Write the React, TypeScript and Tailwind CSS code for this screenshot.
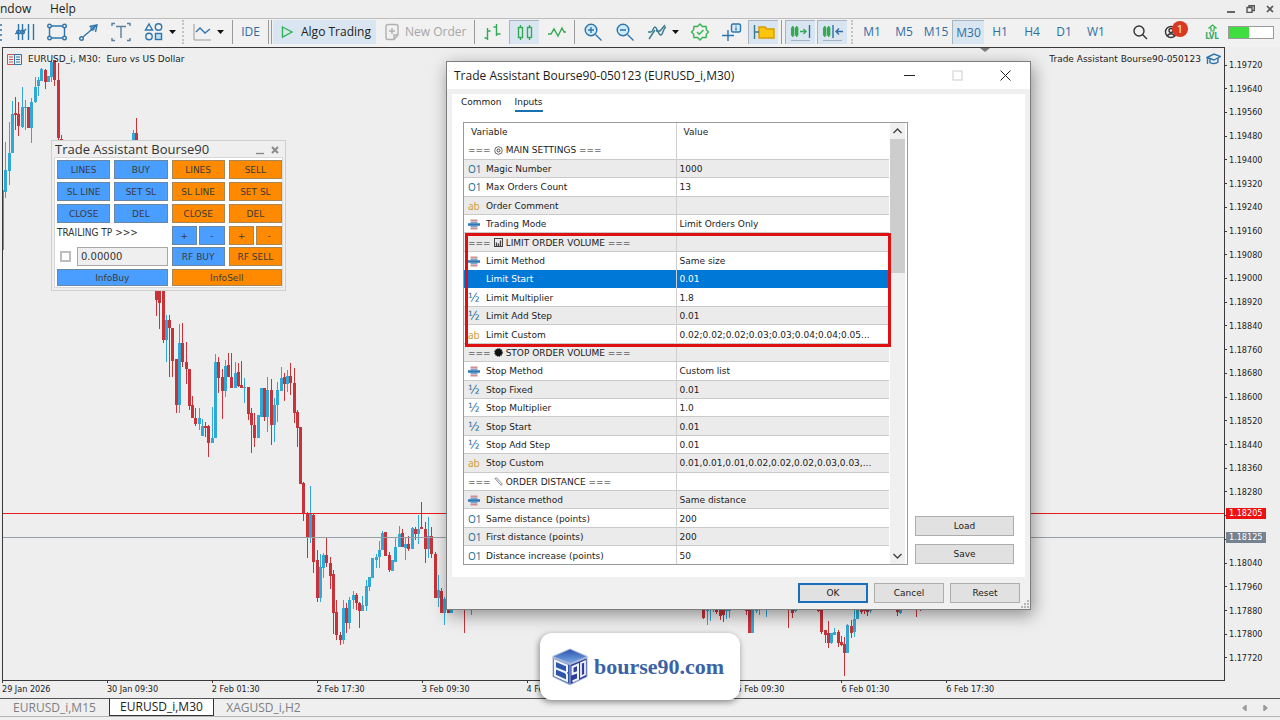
import type { ReactNode } from "react";

// bar index, direction (1 up, 0 down), high, body top, body bottom, low
type Candle = [number, 0 | 1, number, number, number, number];

const candles: Candle[] = [
  [0, 1, 143, 143, 203, 203],
  [1, 1, 95, 123, 145, 151],
  [2, 1, 75, 106, 124, 138],
  [3, 1, 54, 67, 106, 106],
  [4, 0, 50, 66, 68, 83],
  [5, 0, 55, 67, 79, 89],
  [6, 1, 40, 60, 80, 81],
  [7, 1, 53, 60, 61, 83],
  [8, 0, 60, 60, 81, 81],
  [9, 1, 51, 55, 81, 96],
  [10, 1, 30, 40, 55, 56],
  [11, 1, 30, 33, 39, 49],
  [12, 1, 21, 22, 34, 34],
  [13, 0, 22, 23, 35, 42],
  [14, 1, 29, 29, 35, 35],
  [15, 1, 13, 15, 30, 35],
  [16, 0, 13, 13, 33, 39],
  [17, 0, 16, 33, 91, 93],
  [18, 0, 88, 92, 120, 120],
  [40, 1, 83, 86, 93, 110],
  [41, 0, 71, 86, 93, 110],
  [47, 0, 230, 240, 253, 269],
  [48, 0, 230, 240, 256, 282],
  [49, 0, 230, 240, 293, 296],
  [50, 1, 268, 273, 293, 315],
  [51, 0, 268, 273, 281, 330],
  [52, 0, 281, 281, 314, 330],
  [53, 0, 312, 312, 358, 366],
  [54, 1, 277, 296, 358, 366],
  [55, 0, 276, 296, 315, 320],
  [56, 0, 295, 315, 322, 337],
  [57, 0, 322, 322, 359, 363],
  [58, 0, 349, 358, 371, 371],
  [59, 0, 361, 371, 377, 379],
  [60, 1, 361, 371, 377, 383],
  [61, 1, 372, 379, 389, 389],
  [62, 0, 375, 379, 381, 390],
  [63, 0, 378, 379, 396, 410],
  [64, 1, 360, 391, 396, 396],
  [65, 1, 307, 315, 391, 391],
  [66, 0, 310, 315, 331, 346],
  [67, 0, 322, 330, 344, 372],
  [68, 1, 313, 319, 344, 350],
  [69, 0, 306, 318, 330, 330],
  [70, 0, 306, 330, 341, 341],
  [71, 1, 315, 326, 341, 341],
  [72, 0, 316, 325, 339, 340],
  [73, 0, 314, 338, 341, 341],
  [74, 1, 331, 340, 341, 356],
  [75, 0, 340, 340, 367, 373],
  [76, 0, 361, 366, 378, 406],
  [77, 0, 366, 378, 391, 400],
  [78, 1, 368, 368, 391, 391],
  [79, 1, 341, 341, 370, 370],
  [80, 0, 341, 341, 370, 374],
  [81, 1, 330, 343, 370, 385],
  [82, 0, 332, 343, 378, 398],
  [83, 1, 351, 358, 378, 395],
  [84, 1, 335, 343, 358, 375],
  [85, 1, 320, 331, 344, 344],
  [86, 0, 326, 330, 337, 354],
  [87, 1, 323, 329, 337, 345],
  [88, 0, 316, 329, 336, 348],
  [89, 0, 321, 336, 366, 376],
  [90, 0, 363, 365, 381, 400],
  [91, 0, 380, 380, 437, 437],
  [92, 0, 435, 436, 466, 474],
  [93, 0, 465, 466, 490, 511],
  [94, 1, 439, 466, 490, 496],
  [95, 0, 467, 468, 515, 526],
  [96, 0, 503, 513, 551, 555],
  [97, 1, 507, 520, 551, 555],
  [98, 1, 506, 508, 521, 531],
  [99, 0, 490, 508, 516, 520],
  [100, 0, 510, 516, 529, 542],
  [101, 0, 523, 527, 566, 587],
  [102, 0, 553, 565, 588, 593],
  [103, 0, 585, 588, 593, 598],
  [104, 1, 553, 561, 593, 597],
  [105, 0, 556, 561, 576, 586],
  [106, 1, 550, 553, 576, 582],
  [107, 1, 544, 548, 553, 562],
  [108, 0, 546, 548, 556, 563],
  [109, 0, 555, 556, 564, 581],
  [110, 1, 549, 558, 564, 564],
  [111, 1, 533, 539, 559, 564],
  [112, 1, 530, 530, 540, 544],
  [113, 1, 511, 511, 531, 531],
  [114, 1, 507, 510, 513, 521],
  [115, 1, 494, 503, 510, 521],
  [116, 1, 484, 486, 503, 503],
  [117, 0, 485, 485, 509, 509],
  [118, 0, 505, 508, 523, 525],
  [119, 1, 513, 513, 524, 524],
  [120, 1, 490, 500, 515, 515],
  [121, 1, 479, 487, 500, 500],
  [122, 0, 482, 486, 500, 500],
  [123, 1, 490, 497, 501, 513],
  [124, 0, 489, 497, 502, 504],
  [125, 1, 480, 481, 502, 502],
  [126, 0, 480, 482, 487, 493],
  [127, 1, 468, 482, 487, 497],
  [128, 0, 455, 480, 482, 482],
  [129, 0, 475, 482, 502, 516],
  [130, 1, 470, 489, 502, 511],
  [131, 0, 480, 489, 507, 511],
  [132, 0, 505, 507, 551, 551],
  [133, 1, 528, 543, 551, 560],
  [134, 0, 541, 544, 566, 566],
  [135, 1, 550, 552, 566, 578],
  [136, 0, 559, 560, 566, 566],
  [137, 1, 558, 560, 566, 566],
  [141, 0, 540, 550, 552, 586],
  [143, 1, 540, 550, 552, 568],
  [214, 0, 540, 550, 571, 572],
  [215, 1, 540, 550, 564, 578],
  [216, 1, 540, 550, 552, 574],
  [217, 1, 540, 550, 552, 565],
  [218, 0, 540, 550, 565, 567],
  [219, 0, 540, 550, 569, 573],
  [220, 0, 540, 550, 568, 575],
  [221, 1, 540, 550, 564, 572],
  [222, 1, 540, 550, 564, 571],
  [227, 0, 540, 550, 564, 568],
  [228, 0, 540, 550, 586, 586],
  [229, 1, 540, 550, 586, 586],
  [230, 1, 540, 550, 564, 566],
  [231, 1, 540, 550, 552, 568],
  [233, 1, 540, 550, 552, 570],
  [240, 0, 540, 550, 552, 581],
  [241, 0, 540, 550, 566, 571],
  [242, 1, 540, 550, 564, 565],
  [249, 0, 540, 550, 564, 565],
  [250, 0, 540, 550, 585, 587],
  [251, 0, 583, 583, 588, 596],
  [252, 0, 574, 586, 596, 601],
  [253, 1, 586, 586, 596, 597],
  [254, 1, 581, 585, 588, 588],
  [255, 0, 583, 585, 596, 600],
  [256, 0, 589, 595, 598, 599],
  [257, 0, 590, 597, 606, 629],
  [258, 1, 577, 578, 606, 606],
  [259, 0, 573, 579, 586, 591],
  [260, 1, 560, 572, 585, 590],
  [261, 1, 550, 555, 572, 572],
  [262, 0, 540, 550, 565, 567],
  [263, 0, 540, 550, 564, 567],
  [264, 0, 540, 550, 565, 569],
  [265, 1, 540, 550, 564, 566],
  [273, 0, 540, 550, 565, 569],
  [274, 1, 540, 550, 566, 567],
  [279, 0, 540, 550, 552, 570],
  [280, 0, 540, 550, 552, 564],
];

const prices = Array.from({ length: 26 }, (_, i) => (1.1972 - i * 0.0008).toFixed(5));

// these two give way to the bid and ask tags
const covered = ["1.18200", "1.18120"];

const times = [
  "29 Jan 2026", "30 Jan 09:30", "2 Feb 01:30", "2 Feb 17:30", "3 Feb 09:30",
  "4 Feb 01:30", "4 Feb 17:30", "5 Feb 09:30", "6 Feb 01:30", "6 Feb 17:30",
];

const timeframes = ["M1", "M5", "M15", "M30", "H1", "H4", "D1", "W1"];

type Kind = "int" | "str" | "enum" | "real" | "gear" | "stats" | "burst" | "ruler";

const inputs: [Kind, string, string][] = [
  ["gear", "MAIN SETTINGS", ""],
  ["int", "Magic Number", "1000"],
  ["int", "Max Orders Count", "13"],
  ["str", "Order Comment", ""],
  ["enum", "Trading Mode", "Limit Orders Only"],
  ["stats", "LIMIT ORDER VOLUME", ""],
  ["enum", "Limit Method", "Same size"],
  ["real", "Limit Start", "0.01"],
  ["real", "Limit Multiplier", "1.8"],
  ["real", "Limit Add Step", "0.01"],
  ["str", "Limit Custom", "0.02;0.02;0.02;0.03;0.03;0.04;0.04;0.05..."],
  ["burst", "STOP ORDER VOLUME", ""],
  ["enum", "Stop Method", "Custom list"],
  ["real", "Stop Fixed", "0.01"],
  ["real", "Stop Multiplier", "1.0"],
  ["real", "Stop Start", "0.01"],
  ["real", "Stop Add Step", "0.01"],
  ["str", "Stop Custom", "0.01,0.01,0.01,0.02,0.02,0.02,0.03,0.03,..."],
  ["ruler", "ORDER DISTANCE", ""],
  ["enum", "Distance method", "Same distance"],
  ["int", "Same distance (points)", "200"],
  ["int", "First distance (points)", "200"],
  ["int", "Distance increase (points)", "50"],
];

const SELECTED = 7;

function Icon({ children, w = 20, h = 20, color = "#2f75ad" }: { children: ReactNode; w?: number; h?: number; color?: string }) {
  return (
    <svg width={w} height={h} viewBox={`0 0 ${w} ${h}`} fill="none" stroke={color} strokeWidth="1.4" className="shrink-0" aria-hidden="true">
      {children}
    </svg>
  );
}

function Caret() {
  return (
    <svg width="7" height="4" viewBox="0 0 7 4" className="shrink-0" aria-hidden="true">
      <path d="M0 0h7L3.5 4z" fill="#111" />
    </svg>
  );
}

function Tool({ label, className, children }: { label: string; className: string; children: ReactNode }) {
  return (
    <button type="button" aria-label={label} className={`flex h-full shrink-0 items-center justify-center ${className}`}>
      {children}
    </button>
  );
}

const active = "border-t border-l border-[#a9b4c0] bg-[#d9e6f2]";

function Separator() {
  return <span className="h-6 w-px shrink-0 bg-[#9a9a9a]" />;
}

function Dots() {
  return <span className="h-6 w-0 shrink-0 border-l-2 border-dotted border-[#c4c4c4]" />;
}

function Toolbar() {
  return (
    <div className="flex h-[29px] shrink-0 items-center overflow-hidden border-t border-[#bdbdbd] bg-[#f1f1f1] pt-px pb-[3px] font-['Open_Sans',sans-serif] text-[12px]">
      <Tool label="Fibonacci" className="w-[9px] !justify-start">
        <Icon w={4}>
          <path d="M0 3h2M0 8h2M0 13h2M0 18h2" />
        </Icon>
      </Tool>
      <Tool label="Cycle lines" className="w-8">
        <Icon>
          <path d="M3.5 2v16M7.5 2v16M13.5 2v16M18.5 2v16M0 12l3-2M8 10l3-3" />
          <circle cx="3.5" cy="10" r="1.8" />
          <circle cx="7.5" cy="10" r="1.8" />
        </Icon>
      </Tool>
      <Tool label="Rectangle" className="w-8">
        <Icon>
          <path d="M4.5 4h11M4.5 16h11M2.5 6v8M17.5 6v8" />
          <circle cx="2.5" cy="4" r="1.8" />
          <circle cx="17.5" cy="4" r="1.8" />
          <circle cx="2.5" cy="16" r="1.8" />
          <circle cx="17.5" cy="16" r="1.8" />
        </Icon>
      </Tool>
      <Tool label="Arrow line" className="w-8">
        <Icon>
          <path d="M4 15L18 3M10.5 4.5L18 3l-1.5 7" />
          <circle cx="2.5" cy="16.5" r="1.8" />
          <circle cx="13.5" cy="6.5" r="1.6" />
        </Icon>
      </Tool>
      <Tool label="Text" className="w-8">
        <Icon color="#5b7f9d">
          <path d="M1 4V1.5h3M16 1.5h3V4M1 16v2.5h3M16 18.5h3V16M5 4.5h10M10 4.5V16" />
        </Icon>
      </Tool>
      <Tool label="Shapes" className="w-[45px] gap-[5px]">
        <Icon>
          <path d="M5 2l3.5 6h-7z" />
          <circle cx="14.5" cy="5" r="3.2" />
          <circle cx="5" cy="14.5" r="3.2" />
          <rect x="11.5" y="11.5" width="6" height="6" fill="#bfe0f5" />
        </Icon>
        <Caret />
      </Tool>
      <Dots />
      <Tool label="Chart type" className="w-12 gap-[5px]">
        <Icon color="#9a9a9a">
          <path d="M2 2v16h17" strokeWidth="1" />
          <path d="M4 10l4-4 5 5 5-4" stroke="#2f75ad" />
        </Icon>
        <Caret />
      </Tool>
      <Separator />
      <Tool label="IDE" className="w-[35px] text-[#2f6ea5]">IDE</Tool>
      <Separator />
      <span className="w-[2px] shrink-0" />
      <Separator />
      <button type="button" className="ml-px flex h-full w-[103px] shrink-0 items-center gap-2 bg-[#d9e6f2] pl-2 text-[#222]">
        <Icon w={12} h={14} color="#2eb352">
          <path d="M1.5 2L11 7l-9.5 5z" />
        </Icon>
        <span className="whitespace-nowrap">Algo Trading</span>
      </button>
      <button type="button" className="flex h-full w-[98px] shrink-0 items-center gap-[5px] pl-2 text-[#a6a6a6]" disabled>
        <Icon w={16} h={18} color="#b0b0b0">
          <path d="M2 3.5a2 2 0 0 1 2-2h8a2 2 0 0 1 2 2V12l-4 4.5H4a2 2 0 0 1-2-2zM14 12h-4v4.5M8 5v6M5 8h6" />
        </Icon>
        <span className="whitespace-nowrap">New Order</span>
      </button>
      <Separator />
      <Tool label="Bar chart" className="w-[34px]">
        <Icon color="#35a853">
          <path d="M5.5 6v12M5.5 9h3M2.5 16h3M14.5 2v12M14.5 12h4M11.5 5h3" />
        </Icon>
      </Tool>
      <Tool label="Candlesticks" className={`w-[30px] ${active}`}>
        <Icon color="#35a853">
          <rect x="3.5" y="4.5" width="4" height="10" />
          <rect x="12.5" y="4.5" width="4" height="10" />
          <path d="M5.5 2v2.5M5.5 14.5V17M14.5 2v2.5M14.5 14.5V17" />
        </Icon>
      </Tool>
      <Tool label="Line chart" className="w-[35px]">
        <Icon color="#35a853">
          <path d="M1 12h3l3-5 4 7 4-8 2 4h2" />
        </Icon>
      </Tool>
      <Separator />
      <Tool label="Zoom in" className="ml-[2px] w-8">
        <Icon>
          <circle cx="8" cy="8" r="5.8" fill="#cfeaf8" />
          <path d="M12.5 12.5l6 6M5 8h6M8 5v6" />
        </Icon>
      </Tool>
      <Tool label="Zoom out" className="w-8">
        <Icon>
          <circle cx="8" cy="8" r="5.8" fill="#cfeaf8" />
          <path d="M12.5 12.5l6 6M5 8h6" />
        </Icon>
      </Tool>
      <Tool label="Indicators" className="w-[43px] gap-[5px]">
        <Icon color="#3a7a8f">
          <path d="M1 10h3c2 0 2-5 4-5s3 8 6 8c2 0 2-7 5-8M2 17L8 8M9 9h4l5-6" />
        </Icon>
        <Caret />
      </Tool>
      <Tool label="Experts" className="w-8">
        <Icon color="#35b552">
          <path d="M10 2l2.5 2.5H16l.5 3.500 2 2-2 2-.5 3.500h-3.500L10 18l-2.500-2.500H4L3.500 12l-2-2 2-2L4 4.500h3.500z" />
          <path d="M7 10l2.2 2.2L13.5 8" />
        </Icon>
      </Tool>
      <Tool label="Crosshair" className="w-8">
        <Icon>
          <path d="M6 8v11M0 13.5h12" />
          <rect x="9.5" y="2" width="9" height="8" rx="1.5" fill="#d6ecf8" />
          <path d="M14 5.5v3M14 3.5v1" />
        </Icon>
      </Tool>
      <Tool label="Data folder" className={`w-[30px] ${active}`}>
        <Icon w={22} color="#d79a00">
          <path d="M6 4h6l2 2h7v9H6z" fill="#fdc50c" />
          <path d="M1.5 2v14M1.5 9H6" stroke="#3a7a8f" />
        </Icon>
      </Tool>
      <span className="w-[3px] shrink-0" />
      <Separator />
      <Tool label="Auto scroll" className={`ml-[3px] w-[30px] ${active}`}>
        <Icon w={22} color="#35a853">
          <rect x="1.7" y="5" width="2" height="7" fill="#35c853" />
          <rect x="5.7" y="5" width="2" height="7" fill="#35c853" />
          <path d="M2.7 3v11M6.7 3v11M10 8.5h6M13.5 6L16 8.5 13.5 11" />
          <path d="M19.5 2v13" stroke="#2f6ea5" />
          <path d="M1 17.5h19" stroke="#a5b4c4" strokeWidth="1" />
        </Icon>
      </Tool>
      <Tool label="Chart shift" className={`ml-[2px] w-[30px] ${active}`}>
        <Icon w={22} color="#35a853">
          <rect x="1.7" y="5" width="2" height="7" fill="#35c853" />
          <rect x="5.7" y="5" width="2" height="7" fill="#35c853" />
          <path d="M2.7 3v11M6.7 3v11" />
          <path d="M11 2v13M14 8.5h7M17 5.5l-3 3 3 3" stroke="#2f6ea5" />
          <path d="M1 17.5h19" stroke="#a5b4c4" strokeWidth="1" />
        </Icon>
      </Tool>
      <span className="w-1 shrink-0" />
      <Dots />
      <div className="ml-[3px] flex h-full">
        {timeframes.map((t) => (
          <button key={t} type="button" className={`flex h-full w-8 items-center justify-center text-[#2f6ea5] ${t === "M30" ? active : ""}`}>
            {t}
          </button>
        ))}
      </div>
      <div className="ml-auto flex h-full items-center pr-[6px]">
        <Tool label="Search" className="w-8">
          <Icon w={16} h={16} color="#333">
            <circle cx="7" cy="7" r="5" />
            <path d="M10.5 10.5L15 15" />
          </Icon>
        </Tool>
        <button type="button" aria-label="Account" className="relative ml-2 flex h-full w-8 items-center">
          <Icon w={16} h={16} color="#333">
            <circle cx="7" cy="8" r="5.5" />
            <circle cx="7" cy="6.5" r="2" />
            <path d="M3.5 12c1-3 6-3 7 0" />
          </Icon>
          <span className="absolute top-px left-2 flex h-4 w-4 items-center justify-center rounded-full bg-[#db3823] text-[11px] text-white">1</span>
        </button>
        <div className="ml-1 flex w-6 flex-col items-center gap-px font-['DejaVu_Sans_Condensed',sans-serif] text-[8px] leading-[8px] font-bold text-[#35a86a]">
          <Icon w={9} h={8} color="#35b552">
            <path d="M4.5 1L8 4H6v3H3V4H1z" strokeWidth="1.2" />
          </Icon>
          LVL
        </div>
        <span className="ml-1 flex h-[13px] w-[46px] border border-[#9a9a9a] bg-white">
          <span className="w-5 bg-[#3fdd3f]" />
        </span>
      </div>
    </div>
  );
}

function KindIcon({ kind }: { kind: Kind }) {
  if (kind === "int") return <span className="font-['Noto_Sans',sans-serif] text-[10px] text-[#2b7494]">O1</span>;
  if (kind === "str") return <span className="font-['Noto_Sans',sans-serif] text-[10px] text-[#cf9d35]">ab</span>;
  if (kind === "enum")
    return (
      <svg width="12" height="11" viewBox="0 0 12 11" aria-hidden="true">
        <path d="M2.5 1.5h7M2.5 9.5h7" stroke="#d08f8f" strokeWidth="2" />
        <path d="M2.5 3.5h7M2.5 7.5h7" stroke="#7ba3c9" strokeWidth="1.5" />
        <path d="M0 5.5h12" stroke="#2f78b5" strokeWidth="2.5" />
      </svg>
    );
  if (kind === "real") return <span className="font-['DejaVu_Sans',sans-serif] text-[12px] leading-[12px] text-[#2b6f94]">½</span>;
  return (
    <svg width="9" height="9" viewBox="0 0 9 9" fill="none" stroke="#444" aria-hidden="true">
      {kind === "gear" && (
        <>
          <circle cx="4.5" cy="4.5" r="3.8" strokeWidth=".8" />
          <circle cx="4.5" cy="4.5" r="1.5" />
        </>
      )}
      {kind === "stats" && (
        <>
          <rect x=".5" y=".5" width="8" height="8" />
          <path d="M2.5 8V4.5M4.5 8V5.5M6.5 8V2.5" strokeWidth="1.3" />
        </>
      )}
      {kind === "burst" && <circle cx="4.5" cy="4.5" r="3.4" fill="#111" stroke="#111" strokeWidth="1.6" strokeDasharray="1.2 .6" />}
      {kind === "ruler" && <path d="M1 1.5L2.5.8 8.3 7 7 8.3z" stroke="#777" strokeWidth=".9" />}
    </svg>
  );
}

function DialogButton({ children, className = "" }: { children: ReactNode; className?: string }) {
  return (
    <button type="button" className={`flex h-5 items-center justify-center bg-[#e1e1e1] pt-[2px] ${className}`}>
      {children}
    </button>
  );
}

function InputsDialog() {
  return (
    <section
      role="dialog"
      aria-label="Trade Assistant Bourse90-050123"
      className="absolute top-[61px] left-[446px] flex w-[585px] flex-col border border-[#7d7d7d] bg-[#f0f0f0] font-['DejaVu_Sans',sans-serif] text-[9px] text-[#1b1b1b] shadow-[2px_5px_16px_rgba(0,0,0,0.4)]"
    >
      <header className="flex h-[27px] items-center bg-white pr-px pl-[7px] font-['Open_Sans',sans-serif] text-[12px]">
        <h2 className="flex-1">Trade Assistant Bourse90-050123 (EURUSD_i,M30)</h2>
        <button type="button" aria-label="Minimize" className="flex h-full w-12 items-center justify-center">
          <Icon w={11} h={11} color="#222"><path d="M0 5.5h11" strokeWidth="1" /></Icon>
        </button>
        <button type="button" aria-label="Maximize" className="flex h-full w-12 items-center justify-center" disabled>
          <Icon w={11} h={11} color="#ccc"><rect x="1" y="1" width="9" height="9" strokeWidth="1" /></Icon>
        </button>
        <button type="button" aria-label="Close" className="flex h-full w-12 items-center justify-center">
          <Icon w={11} h={11} color="#222"><path d="M.5.5l10 10M10.5.5l-10 10" strokeWidth="1" /></Icon>
        </button>
      </header>

      <div className="mx-[5px] mt-[5px] flex flex-col bg-white px-[11px] pb-3">
        <nav className="-ml-[2px] flex h-7 items-start gap-[13px] pt-px">
          <button type="button" className="h-[17px] border-b-2 border-transparent">Common</button>
          <button type="button" className="h-[17px] border-b-2 border-[#1a70b0]">Inputs</button>
        </nav>

        <div className="flex gap-[7px]">
          <div className="relative flex h-[443px] flex-1 overflow-hidden border border-[#9b9b9b] bg-white pr-[2px]">
            <table className="mr-px h-full flex-1 table-fixed border-collapse text-left">
              <thead>
                <tr className="h-[18px]">
                  <th className="w-[212px] border-r border-[#cfcfcf] p-0 pt-[2px] pl-[7px] font-normal">Variable</th>
                  <th className="p-0 pt-[2px] pl-[7px] font-normal">Value</th>
                </tr>
              </thead>
              <tbody>
                {inputs.map(([kind, name, value], i) => {
                  const heading = ["gear", "stats", "burst", "ruler"].includes(kind);
                  const selected = i === SELECTED;
                  return (
                    <tr
                      key={name}
                      className={`h-[18px] ${selected ? "bg-[#0078d7] text-white" : i % 2 ? "border-y border-[#cacaca] bg-[#ebebeb]" : ""}`}
                    >
                      <td className="border-r border-[#cfcfcf] p-0 pt-px pl-1 leading-[14px]">
                        {heading ? (
                          <span className="flex items-center gap-[3px] whitespace-nowrap">
                            === <KindIcon kind={kind} /> {name} ===
                          </span>
                        ) : (
                          <span className="flex items-center gap-[5px] whitespace-nowrap">
                            <span className="flex w-[13px] items-center">{!selected && <KindIcon kind={kind} />}</span>
                            {name}
                          </span>
                        )}
                      </td>
                      <td className="p-0 pt-px pl-[3px] leading-[14px] whitespace-nowrap">{value}</td>
                    </tr>
                  );
                })}
              </tbody>
            </table>
            <div className="flex w-[15px] flex-col bg-[#f0f0f0]">
              <button type="button" aria-label="Scroll up" className="flex h-4 items-center justify-center">
                <Icon w={9} h={6} color="#444"><path d="M.5 5l4-4 4 4" /></Icon>
              </button>
              <div className="h-[134px] bg-[#cdcdcd]" />
              <button type="button" aria-label="Scroll down" className="mt-auto flex h-4 items-center justify-center">
                <Icon w={9} h={6} color="#444"><path d="M.5 1l4 4 4-4" /></Icon>
              </button>
            </div>
            <div className="pointer-events-none absolute top-[110px] left-px h-[114px] w-[426px] border-[3px] border-[#dd1111]" />
          </div>
          <div className="flex w-[99px] flex-col justify-end gap-2 pb-px">
            <DialogButton className="border border-[#adadad]">Load</DialogButton>
            <DialogButton className="border border-[#adadad]">Save</DialogButton>
          </div>
        </div>
      </div>

      <footer className="flex h-8 items-center justify-end gap-[6px] pr-[10px]">
        <DialogButton className="w-[70px] border-2 border-[#1a70b8]">OK</DialogButton>
        <DialogButton className="w-[70px] border border-[#adadad]">Cancel</DialogButton>
        <DialogButton className="w-[70px] border border-[#adadad]">Reset</DialogButton>
      </footer>
      <svg width="9" height="9" viewBox="0 0 9 9" className="absolute right-px bottom-px" aria-hidden="true">
        <path d="M7 1h2v2H7zM7 4h2v2H7zM7 7h2v2H7zM4 4h2v2H4zM4 7h2v2H4zM1 7h2v2H1z" fill="#b5b5b5" />
      </svg>
    </section>
  );
}

const blue = "border-[#6a86a3] bg-[#4a9eff]";
const orange = "border-[#a5875a] bg-[#ff8a00]";

function PanelButton({ tone, className = "h-[19px]", children }: { tone: string; className?: string; children: ReactNode }) {
  return (
    <button type="button" className={`border text-center leading-[14px] text-[#3b3b3b] ${tone} ${className}`}>
      {children}
    </button>
  );
}

function AssistantPanel() {
  return (
    <section className="absolute top-[140px] left-[51px] w-[235px] border border-[#cfcfcf] bg-[#efefef] p-[2px] font-['DejaVu_Sans',sans-serif] text-[9px] text-[#333]">
      <header className="flex h-[13px] items-center font-['Open_Sans',sans-serif] text-[13px] leading-[11px]">
        <h2 className="flex-1 pl-px">Trade Assistant Bourse90</h2>
        <button type="button" aria-label="Minimize panel" className="mr-1 flex h-3 w-3 items-end">
          <Icon w={10} h={4} color="#8a8a8a"><path d="M1 1.500h8" /></Icon>
        </button>
        <button type="button" aria-label="Close panel" className="flex h-3 w-3 items-center">
          <Icon w={8} h={8} color="#8a8a8a"><path d="M1 1l6 6M7 1L1 7" strokeWidth="2" /></Icon>
        </button>
      </header>
      <div className="mt-px flex flex-col gap-[3px] border border-[#d8d8d8] bg-white pt-[2px] pb-px pl-[2px]">
        <div className="grid grid-cols-4 gap-x-1 gap-y-[3px]">
          <PanelButton tone={blue}>LINES</PanelButton>
          <PanelButton tone={blue}>BUY</PanelButton>
          <PanelButton tone={orange}>LINES</PanelButton>
          <PanelButton tone={orange}>SELL</PanelButton>
          <PanelButton tone={blue}>SL LINE</PanelButton>
          <PanelButton tone={blue}>SET SL</PanelButton>
          <PanelButton tone={orange}>SL LINE</PanelButton>
          <PanelButton tone={orange}>SET SL</PanelButton>
          <PanelButton tone={blue}>CLOSE</PanelButton>
          <PanelButton tone={blue}>DEL</PanelButton>
          <PanelButton tone={orange}>CLOSE</PanelButton>
          <PanelButton tone={orange}>DEL</PanelButton>
          <label htmlFor="trailing" className="col-span-2 font-['DejaVu_Sans_Condensed',sans-serif] text-[10px] leading-[13px]">TRAILING TP &gt;&gt;&gt;</label>
          <div className="grid grid-cols-2 gap-[2px]">
            <PanelButton tone={blue}>+</PanelButton>
            <PanelButton tone={blue}>-</PanelButton>
          </div>
          <div className="grid grid-cols-2 gap-[2px]">
            <PanelButton tone={orange}>+</PanelButton>
            <PanelButton tone={orange}>-</PanelButton>
          </div>
        </div>
        <div className="-mt-px grid grid-cols-4 gap-x-1 gap-y-[3px]">
          <div className="col-span-2 flex items-center">
            <input id="trailing" type="checkbox" className="mr-[6px] ml-[3px] h-[11px] w-[11px] shrink-0 appearance-none border-2 border-[#bdbdbd] bg-white" />
            <input
              type="text"
              aria-label="Trailing value"
              defaultValue="0.00000"
              className="h-[19px] w-full min-w-0 border border-[#a8a8a8] bg-[#efefef] px-[3px] text-[10px] text-[#333]"
            />
          </div>
          <PanelButton tone={blue}>RF BUY</PanelButton>
          <PanelButton tone={orange}>RF SELL</PanelButton>
          <PanelButton tone={blue} className="col-span-2 h-[17px]">InfoBuy</PanelButton>
          <PanelButton tone={orange} className="col-span-2 h-[17px]">InfoSell</PanelButton>
        </div>
      </div>
    </section>
  );
}

function Watermark() {
  return (
    <a
      href="#bourse90"
      className="absolute top-[633px] left-[540px] flex h-[67px] w-[200px] items-center gap-[6px] rounded-xl bg-white pl-3 font-['Liberation_Serif',serif] text-[22px] font-bold text-[#3b62a5] shadow-[-1px_2px_6px_rgba(0,0,0,0.45)]"
    >
      <svg width="36" height="38" viewBox="0 0 36 38" className="shrink-0" aria-hidden="true">
        <defs>
          <linearGradient id="cubeTop" x1="0" y1="0" x2="0" y2="1">
            <stop offset="0" stopColor="#2c56ad" />
            <stop offset="1" stopColor="#79a7e6" />
          </linearGradient>
        </defs>
        <path d="M18 .5L35.5 8v21L18 37.5.5 29V8z" fill="#a9b6d6" />
        <path d="M18 1.5l16 7-16 6.5L2 8.5z" fill="url(#cubeTop)" />
        <path d="M1.500 10.500L17.500 17v19l-16-7.500z" fill="#2f55a8" />
        <path d="M18.500 17l16-6.500v18l-16 7.500z" fill="#2e3f9a" />
        <path d="M3 12.500l12 5v6l-1.500 1 1.500 2v6.500L3 27.500zM3 20l11 4.500" fill="none" stroke="#eef2fb" strokeWidth="2" />
        <path d="M26 24l-5.500 2v-7l5.500-2.500V31l-5.500 2.500" fill="none" stroke="#eef2fb" strokeWidth="2" />
        <path d="M29 15l4-1.700v13.200L29 28.500z" fill="none" stroke="#eef2fb" strokeWidth="1.800" />
      </svg>
      bourse90.com
    </a>
  );
}

function Chart() {
  return (
    <div className="flex min-h-0 flex-1 pl-[2px]">
      <div className="flex min-w-0 flex-1 flex-col">
        <div className="relative flex min-h-0 flex-1 border border-[#3a3a3a]">
          <svg className="min-h-0 w-full flex-1" role="img" aria-label="EURUSD 30 minute candlestick chart">
            {candles.map(([n, up, high, top, bottom, low]) => {
              const x = Math.round(n * 3.277) - 1;
              const fill = up ? "#31a9d6" : "#c73338";
              return (
                <g key={n} fill={fill}>
                  <rect x={x} y={high - 1} width="1" height={Math.max(low - high, 1)} />
                  <rect x={x - 1} y={top - 1} width="3" height={Math.max(bottom - top, 1)} />
                </g>
              );
            })}
            <rect y="465" width="100%" height="1" fill="#e81c1c" />
            <rect y="489" width="100%" height="1" fill="#93a0aa" />
            <path d="M977 0h10l-5 4z" fill="#7d7d7d" />
          </svg>
          <div className="absolute inset-x-0 top-1 flex items-center justify-between pr-[3px] pl-1 font-['DejaVu_Sans',sans-serif] text-[9px] leading-[14px] text-[#222]">
            <span className="flex items-center gap-[6px]">
              <svg width="15" height="11" viewBox="0 0 15 11" fill="none" aria-hidden="true">
                <path d="M7.5.5h-7v10h7M2 3h4M2 5.5h4M2 8h4" stroke="#d0504c" />
                <path d="M7.5.5h7v10h-7zM9 3h4M9 5.5h4M9 8h4" stroke="#2f75ad" />
              </svg>
              <span className="whitespace-pre">EURUSD_i, M30:  Euro vs US Dollar</span>
            </span>
            <span className="flex items-center gap-[5px]">
              Trade Assistant Bourse90-050123
              <Icon w={15} h={12}>
                <path d="M1 4.5L8 1l6.5 2.5L8 7zM4 6v3.5c2 1.5 6 1.5 8-.5V5M1.5 5v6" />
              </Icon>
            </span>
          </div>
        </div>
        <div className="flex h-[17px] shrink-0 overflow-hidden font-['DejaVu_Sans_Condensed','DejaVu_Sans',sans-serif] text-[9px] leading-[12px] text-[#222]">
          {times.map((t) => (
            <span key={t} className="w-[8.58%] shrink-0 whitespace-nowrap">
              <span className="block h-[2px] w-px bg-[#3a3a3a]" />
              {t}
            </span>
          ))}
        </div>
      </div>
      <div className="relative flex w-[55px] shrink-0 flex-col justify-between pt-3 pb-[34px] font-['DejaVu_Sans_Condensed','DejaVu_Sans',sans-serif] text-[9px] leading-[12px] text-[#222]">
        {prices.map((p) => (
          <span key={p} className="flex h-3 items-center gap-[2px]">
            <span className="h-px w-[2px] bg-[#3a3a3a]" />
            {!covered.includes(p) && p}
          </span>
        ))}
        <span className="absolute top-[461px] left-px h-[11px] w-10 bg-[#ee1111] pl-[3px] leading-[11px] text-white">1.18205</span>
        <span className="absolute top-[485px] left-px h-[11px] w-10 bg-[#75828f] pl-[3px] leading-[11px] text-white">1.18125</span>
      </div>
    </div>
  );
}

export default function App() {
  return (
    <div className="relative flex h-screen flex-col overflow-hidden bg-[#eeeeee]">
      <div className="flex h-[18px] shrink-0 items-center font-['Open_Sans',sans-serif] text-[12px] leading-[16px] text-[#222]">
        <button type="button" className="w-[30px] text-left">ndow</button>
        <button type="button" className="ml-5">Help</button>
        <div className="ml-auto flex items-center gap-[11px] pr-[6px]">
          <button type="button" aria-label="Minimize window">
            <Icon w={8} h={8} color="#555"><path d="M0 7h8" strokeWidth="1.8" /></Icon>
          </button>
          <button type="button" aria-label="Restore window">
            <Icon w={9} h={8} color="#555"><path d="M1 2.5h5v5H1zM3 2V.7h5.3v4.800H6.500" /></Icon>
          </button>
          <button type="button" aria-label="Close window">
            <Icon w={8} h={8} color="#555"><path d="M1 1l6 6M7 1L1 7" strokeWidth="1.7" /></Icon>
          </button>
        </div>
      </div>
      <Toolbar />
      <Chart />
      <div className="flex h-[22px] shrink-0 border-t border-[#555] bg-[#efefef] font-['Open_Sans',sans-serif] text-[12px] leading-[16px] text-[#808080]">
        <div className="flex h-[18px] flex-1 border-b border-[#b5b5b5]">
          <button type="button" className="w-[109px]">EURUSD_i,M15</button>
          <button type="button" className="h-[17px] w-[105px] border-x border-b border-[#333] bg-white text-[#222]">EURUSD_i,M30</button>
          <button type="button" className="w-[99px]">XAGUSD_i,H2</button>
          <div className="ml-auto flex items-center gap-4 pr-3">
            <button type="button" aria-label="Scroll tabs left">
              <Icon w={5} h={6} color="#999"><path d="M4 .5L1 3l3 2.5z" fill="#999" /></Icon>
            </button>
            <button type="button" aria-label="Scroll tabs right">
              <Icon w={5} h={6} color="#999"><path d="M1 .5L4 3 1 5.5z" fill="#999" /></Icon>
            </button>
          </div>
        </div>
      </div>
      <AssistantPanel />
      <InputsDialog />
      <Watermark />
    </div>
  );
}
